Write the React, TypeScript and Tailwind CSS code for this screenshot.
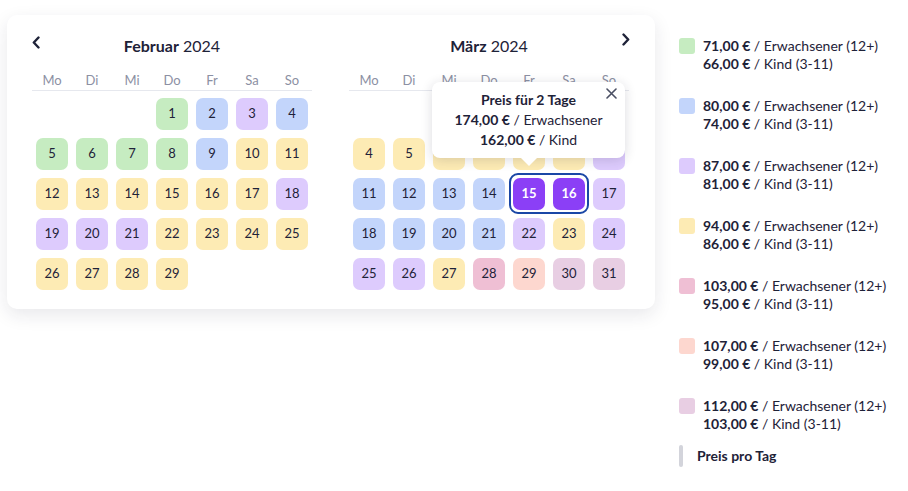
import React from 'react';

type Tone = 'g' | 'b' | 'p' | 'y' | 'k' | 's' | 'm' | 'sel';

const TONE: Record<Tone, string> = {
  g: 'bg-[#c6ecc1]',
  b: 'bg-[#c3d5fb]',
  p: 'bg-[#ddcbfd]',
  y: 'bg-[#fdebb4]',
  k: 'bg-[#efbfd4]',
  s: 'bg-[#fdd7cf]',
  m: 'bg-[#e8cee3]',
  sel: 'bg-[#8b3ff6] text-white font-bold',
};

const WEEKDAYS = ['Mo', 'Di', 'Mi', 'Do', 'Fr', 'Sa', 'So'];

const FEB: Tone[] = [
  'g', 'b', 'p', 'b',
  'g', 'g', 'g', 'g', 'b', 'y', 'y',
  'y', 'y', 'y', 'y', 'y', 'y', 'p',
  'p', 'p', 'p', 'y', 'y', 'y', 'y',
  'y', 'y', 'y', 'y',
];

const MAR: Tone[] = [
  'y', 'y', 'p',
  'y', 'y', 'y', 'y', 'y', 'y', 'p',
  'b', 'b', 'b', 'b', 'sel', 'sel', 'p',
  'b', 'b', 'b', 'b', 'p', 'y', 'p',
  'p', 'p', 'y', 'k', 's', 'm', 'm',
];

const LEGEND = [
  { c: 'bg-[#c6ecc1]', a: '71,00 €', k: '66,00 €' },
  { c: 'bg-[#c3d5fb]', a: '80,00 €', k: '74,00 €' },
  { c: 'bg-[#ddcbfd]', a: '87,00 €', k: '81,00 €' },
  { c: 'bg-[#fdebb4]', a: '94,00 €', k: '86,00 €' },
  { c: 'bg-[#efbfd4]', a: '103,00 €', k: '95,00 €' },
  { c: 'bg-[#fdd7cf]', a: '107,00 €', k: '99,00 €' },
  { c: 'bg-[#e8cee3]', a: '112,00 €', k: '103,00 €' },
];

const Chevron = ({ dir }: { dir: 'left' | 'right' }) => (
  <svg width="8" height="13" viewBox="0 0 8 13" fill="none">
    <path
      d={dir === 'left' ? 'M6.5 1.5 L1.8 6.5 L6.5 11.5' : 'M1.5 1.5 L6.2 6.5 L1.5 11.5'}
      stroke="#1e2238"
      strokeWidth="2.4"
      strokeLinecap="round"
      strokeLinejoin="round"
    />
  </svg>
);

const Month: React.FC<{
  name: string;
  offset: number;
  days: Tone[];
  nav: 'left' | 'right';
  children?: React.ReactNode;
}> = ({ name, offset, days, nav, children }) => (
  <div className="relative w-[280px]">
    <div className="relative h-[22px] flex items-center justify-center">
      <span className="text-[16px] leading-[22px]">
        <span className="font-bold">{name}</span> 2024
      </span>
      <span className={`absolute ${nav === 'left' ? 'left-0 top-[1px]' : 'right-[-1px] top-[-2px]'}`}>
        <Chevron dir={nav} />
      </span>
    </div>
    <div className="mt-[13px] grid grid-cols-7 border-b border-[#e6e8ee] h-[21px] text-[13px] leading-[20px] text-[#8c90a3]">
      {WEEKDAYS.map((d) => (
        <div key={d} className="text-center">{d}</div>
      ))}
    </div>
    <div className="mt-[7px] grid grid-cols-7 gap-y-[8px]">
      {Array.from({ length: offset }).map((_, i) => (
        <div key={'e' + i} className="h-[32px]" />
      ))}
      {days.map((t, i) => (
        <div key={i} className="flex justify-center">
          <div className={`w-[32px] h-[32px] rounded-[7px] flex items-center justify-center text-[13px] ${TONE[t]}`}>
            {i + 1}
          </div>
        </div>
      ))}
    </div>
    {children}
  </div>
);

export default function App() {
  return (
    <div
      className="w-[908px] h-[491px] bg-white flex text-[#1e2238]"
      style={{ fontFamily: 'Lato, "Open Sans", sans-serif' }}
    >
      <div className="ml-[7px] mt-[15px] self-start w-[648px] rounded-[10px] bg-white shadow-[0_6px_18px_rgba(30,34,56,0.10)] pl-[25px] pt-[20px] pb-[19px] flex gap-[37px]">
        <Month name="Februar" offset={3} days={FEB} nav="left" />
        <Month name="März" offset={4} days={MAR} nav="right">
          {/* Auswahlrahmen 15-16 */}
          <div className="absolute left-[160px] top-[138px] w-[80px] h-[41px] rounded-[9px] border-2 border-[#1a47a6]" />
          {/* Tooltip */}
          <div className="absolute left-[83px] top-[47px] w-[193px] h-[76px] rounded-[8px] bg-white shadow-[0_2px_12px_rgba(30,34,56,0.16)] text-center text-[14px] leading-[19px] pt-[8px]">
            <div className="font-bold text-[14px]">Preis für 2 Tage</div>
            <div className="mt-[1px]"><span className="font-bold">174,00 €</span> / Erwachsener</div>
            <div className="mt-[1px]"><span className="font-bold">162,00 €</span> / Kind</div>
            <span className="absolute right-[8px] top-[6px]">
              <svg width="11" height="11" viewBox="0 0 11 11">
                <path d="M1 1 L10 10 M10 1 L1 10" stroke="#4a4f63" strokeWidth="1.6" strokeLinecap="round" />
              </svg>
            </span>
            <div className="absolute left-[88px] bottom-[-8px] w-0 h-0 border-l-[9px] border-r-[9px] border-t-[9px] border-l-transparent border-r-transparent border-t-white" />
          </div>
        </Month>
      </div>

      <div className="ml-[24px] mt-[37px] flex flex-col text-[14px] leading-[18px]">
        {LEGEND.map((l, i) => (
          <div key={i} className="flex items-start gap-[8px] mb-[24px]">
            <div className={`w-[16px] h-[16px] rounded-[3px] mt-[1px] ${l.c}`} />
            <div>
              <div><span className="font-bold">{l.a}</span> / Erwachsener (12+)</div>
              <div><span className="font-bold">{l.k}</span> / Kind (3-11)</div>
            </div>
          </div>
        ))}
        <div className="-mt-[12px] flex items-center h-[22px]">
          <div className="w-[4px] h-[22px] rounded-[2px] bg-[#d3d4db]" />
          <span className="ml-[14px] font-bold">Preis pro Tag</span>
        </div>
      </div>
    </div>
  );
}
